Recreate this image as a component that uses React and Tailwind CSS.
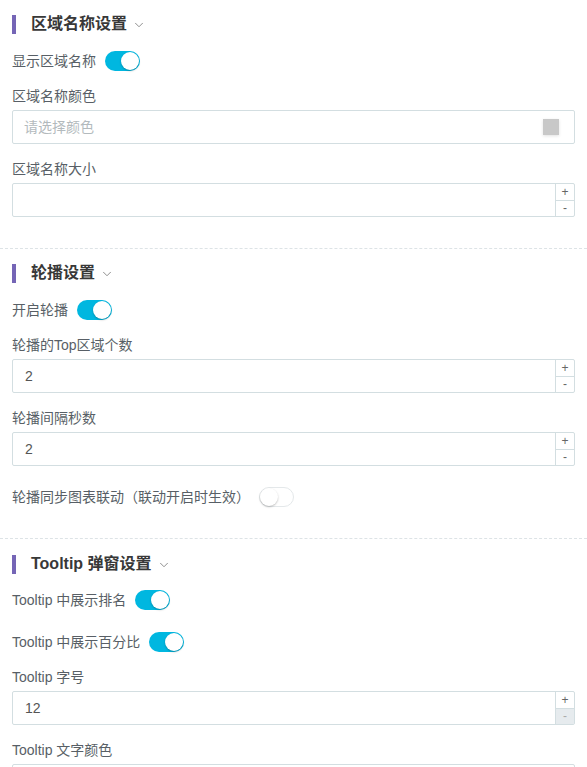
import { ChevronDown } from 'lucide-react';

const font = { fontFamily: '"Liberation Sans", "Noto Sans CJK SC", sans-serif' };

const SectionTitle = ({ title }) => (
    <div className="flex items-center h-[20px]">
        <span className="w-[4px] h-[19px] bg-[#7565b6]" />
        <span className="ml-[15px] text-[16px] font-bold text-[#383838]">{title}</span>
        <ChevronDown className="ml-[5px] mt-[1px] text-[#777]" size={14} strokeWidth={1.4} />
    </div>
);

const Toggle = ({ on }) => (
    <span
        className={`relative inline-block w-[35px] h-[20px] rounded-full ${
            on ? 'bg-[#00b7e0]' : 'bg-white border border-[#e4e8ea]'
        }`}
    >
        <span
            className={`absolute w-[18px] h-[18px] rounded-full bg-white shadow-[0_1px_2px_rgba(0,0,0,0.25)] ${
                on ? 'right-[1px] top-[1px]' : 'left-[0px] top-[0px]'
            }`}
        />
    </span>
);

const SwitchRow = ({ label, on, className = '' }) => (
    <div className={`flex items-center h-[20px] ${className}`}>
        <span className="text-[14px] text-[#585f66]">{label}</span>
        <span className="ml-[9px] flex">
            <Toggle on={on} />
        </span>
    </div>
);

const Label = ({ children, className = '' }) => (
    <div className={`h-[20px] leading-[20px] text-[14px] text-[#585f66] ${className}`}>{children}</div>
);

const NumberInput = ({ value, minDisabled }) => (
    <div className="mt-[4px] flex h-[34px] border border-[#d3dee1] rounded-[2px] bg-white">
        <div className="flex-1 flex items-center pl-[12px] text-[14px] text-[#555]">{value}</div>
        <div className="w-[19px] flex flex-col border-l border-[#d3dee1] text-[12px] text-[#666] leading-none">
            <div className="flex-1 flex items-center justify-center border-b border-[#d3dee1]">+</div>
            <div className={`flex-1 flex items-center justify-center ${minDisabled ? 'bg-[#e6ebee] text-[#aaa]' : ''}`}>-</div>
        </div>
    </div>
);

const ColorInput = () => (
    <div className="mt-[4px] flex items-center h-[34px] border border-[#d3dee1] rounded-[2px] bg-white px-[11px]">
        <span className="flex-1 text-[14px] text-[#b3babd]">请选择颜色</span>
        <span className="w-[16px] h-[16px] bg-[#c8c8c8] shadow-[0_1px_3px_rgba(0,0,0,0.12)] mr-[4px]" />
    </div>
);

const Divider = () => <div className="border-t border-dashed border-[#dde3e6]" />;

export default function App() {
    return (
        <div className="w-[587px] h-[767px] overflow-hidden bg-white" style={font}>
            <div className="px-[12px] pt-[14px] pb-[31px]">
                <SectionTitle title="区域名称设置" />
                <SwitchRow label="显示区域名称" on className="mt-[17px]" />
                <Label className="mt-[15px]">区域名称颜色</Label>
                <ColorInput />
                <Label className="mt-[15px]">区域名称大小</Label>
                <NumberInput value="" />
            </div>
            <Divider />
            <div className="px-[12px] pt-[14px] pb-[31px]">
                <SectionTitle title="轮播设置" />
                <SwitchRow label="开启轮播" on className="mt-[17px]" />
                <Label className="mt-[15px]">轮播的Top区域个数</Label>
                <NumberInput value="2" />
                <Label className="mt-[15px]">轮播间隔秒数</Label>
                <NumberInput value="2" />
                <SwitchRow label="轮播同步图表联动（联动开启时生效）" on={false} className="mt-[21px]" />
            </div>
            <Divider />
            <div className="px-[12px] pt-[15px]">
                <SectionTitle title="Tooltip 弹窗设置" />
                <SwitchRow label="Tooltip 中展示排名" on className="mt-[16px]" />
                <SwitchRow label="Tooltip 中展示百分比" on className="mt-[22px]" />
                <Label className="mt-[15px]">Tooltip 字号</Label>
                <NumberInput value="12" minDisabled />
                <Label className="mt-[15px]">Tooltip 文字颜色</Label>
                <div className="mt-[4px] h-[34px] border border-[#d3dee1] rounded-[2px]" />
            </div>
        </div>
    );
}
